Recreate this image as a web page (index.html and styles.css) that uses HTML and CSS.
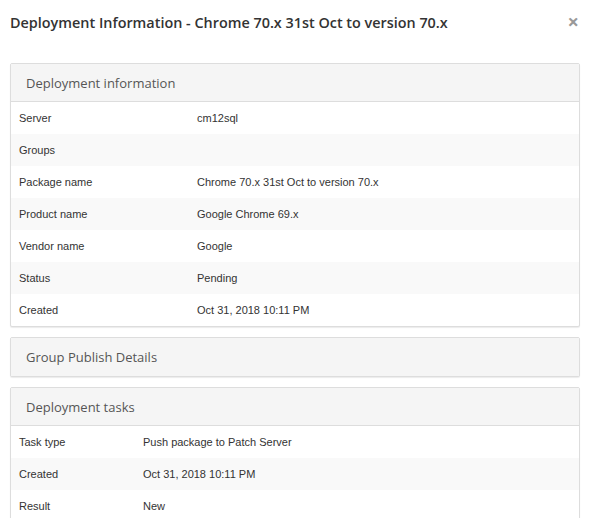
FILE: index.html
```html
<!DOCTYPE html>
<html>
<head>
<meta charset="utf-8">
<link rel="stylesheet" href="styles.css">
</head>
<body>
<div class="modal">
  <div class="modal-header">
    <h4 class="modal-title">Deployment Information - Chrome 70.x 31st Oct to version 70.x</h4>
    <span class="close">&times;</span>
  </div>
  <div class="modal-body">
    <div class="panel">
      <div class="panel-heading">Deployment information</div>
      <table class="info">
        <tr><td class="k1">Server</td><td>cm12sql</td></tr>
        <tr><td class="k1">Groups</td><td></td></tr>
        <tr><td class="k1">Package name</td><td>Chrome 70.x 31st Oct to version 70.x</td></tr>
        <tr><td class="k1">Product name</td><td>Google Chrome 69.x</td></tr>
        <tr><td class="k1">Vendor name</td><td>Google</td></tr>
        <tr><td class="k1">Status</td><td>Pending</td></tr>
        <tr><td class="k1">Created</td><td>Oct 31, 2018 10:11 PM</td></tr>
      </table>
    </div>
    <div class="panel">
      <div class="panel-heading solo">Group Publish Details</div>
    </div>
    <div class="panel">
      <div class="panel-heading">Deployment tasks</div>
      <table class="info">
        <tr><td class="k2">Task type</td><td>Push package to Patch Server</td></tr>
        <tr><td class="k2">Created</td><td>Oct 31, 2018 10:11 PM</td></tr>
        <tr><td class="k2">Result</td><td>New</td></tr>
      </table>
    </div>
  </div>
</div>
</body>
</html>
```
FILE: styles.css
```css
html, body {
  margin: 0;
  padding: 0;
  background: #fff;
}
.modal {
  width: 593px;
}
.modal-header {
  display: flex;
  align-items: center;
  justify-content: space-between;
  padding: 10px 14px 10px 10px;
  height: 24px;
}
.modal-title {
  margin: 0;
  font-family: "Open Sans", sans-serif;
  font-weight: 600;
  font-size: 14.4px;
  color: #333;
}
.close {
  font-family: "Open Sans", sans-serif;
  font-size: 20px;
  font-weight: 700;
  color: #999;
  line-height: 1;
}
.modal-body {
  padding: 19px 13px 0 10px;
}
.panel {
  border: 1px solid #ddd;
  border-radius: 2px;
  background: #fff;
  box-shadow: 0 1px 1px rgba(0,0,0,0.08);
  margin-bottom: 10px;
}
.panel-heading {
  background: #f5f5f5;
  border-bottom: 1px solid #ddd;
  height: 38px;
  box-sizing: border-box;
  padding: 0 15px;
  display: flex;
  align-items: center;
  font-family: "Open Sans", sans-serif;
  font-size: 13px;
  color: #555;
}
.panel-heading.solo {
  border-bottom: none;
  height: 38px;
}
.info {
  width: 100%;
  border-collapse: collapse;
  font-family: "Liberation Sans", Arial, sans-serif;
  font-size: 11px;
  color: #333;
}
.info td {
  height: 32px;
  padding: 0 8px;
  vertical-align: middle;
}
.info tr:nth-child(even) td {
  background: #f9f9f9;
}
.info td.k1 {
  width: 162px;
}
.info td.k2 {
  width: 108px;
}
```
